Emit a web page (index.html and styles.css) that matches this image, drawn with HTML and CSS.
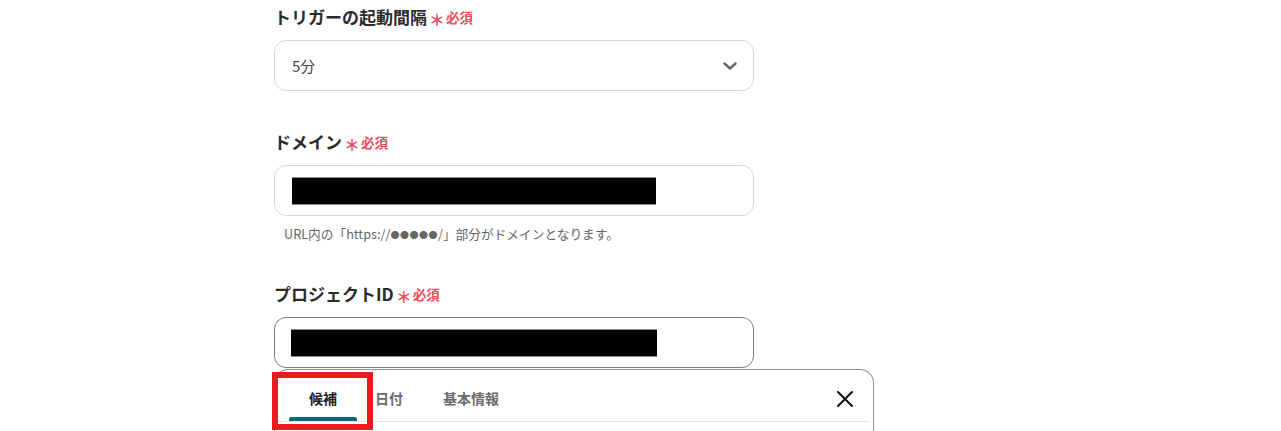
FILE: index.html
```html
<!DOCTYPE html>
<html lang="ja">
<head>
<meta charset="utf-8">
<title>Form</title>
<link rel="stylesheet" href="styles.css">
</head>
<body>
<div class="form">
  <div class="field first">
    <div class="label">トリガーの起動間隔<span class="req"><span class="ast">＊</span>必須</span></div>
    <div class="box select">
      <span class="value">5分</span>
      <svg class="chev" width="14" height="8" viewBox="0 0 14 8"><path d="M1.5 1.5 L7 6.5 L12.5 1.5" fill="none" stroke="#666" stroke-width="2.4" stroke-linecap="round" stroke-linejoin="round"/></svg>
    </div>
  </div>
  <div class="field second">
    <div class="label">ドメイン<span class="req"><span class="ast">＊</span>必須</span></div>
    <div class="box"><span class="mask mask-a"></span></div>
    <div class="help">URL内の「https://<span class="dots">●●●●●</span>/」部分がドメインとなります。</div>
  </div>
  <div class="field third">
    <div class="label">プロジェクトID<span class="req"><span class="ast">＊</span>必須</span></div>
    <div class="box focused"><span class="mask mask-b"></span></div>
  </div>
</div>
<div class="popup">
  <div class="tabs">
    <div class="tab active">候補</div>
    <div class="tab second-tab">日付</div>
    <div class="tab">基本情報</div>
    <svg class="close" width="18" height="18" viewBox="0 0 18 18"><path d="M2 2 L16 16 M16 2 L2 16" stroke="#111" stroke-width="2" stroke-linecap="round"/></svg>
  </div>
</div>
<div class="highlight"></div>
</body>
</html>
```
FILE: styles.css
```css
html, body {
  margin: 0;
  padding: 0;
  background: #fff;
  overflow: hidden;
}
body {
  width: 1281px;
  height: 431px;
  position: relative;
  font-family: "Noto Sans CJK JP", "Noto Sans", sans-serif;
  color: #333;
}
.form {
  padding-left: 274px;
  padding-top: 5px;
  width: 480px;
}
.field.second { margin-top: 39px; }
.field.third { margin-top: 38px; }
.label {
  font-size: 17px;
  font-weight: 700;
  line-height: 24px;
  height: 24px;
  color: #2b2b2b;
  margin-bottom: 11px;
  display: flex;
  align-items: center;
}
.req {
  color: #ea4c5d;
  font-size: 13.5px;
  font-weight: 700;
  margin-left: 2px;
  display: inline-flex;
  align-items: center;
}
.ast {
  font-size: 16px;
  font-weight: 700;
  margin-right: 1px;
  position: relative;
  top: 2px;
}
.box {
  box-sizing: border-box;
  height: 51px;
  width: 480px;
  border: 1px solid #d4d8de;
  border-radius: 12px;
  display: flex;
  align-items: center;
  padding-left: 17px;
  padding-right: 16px;
}
.box.focused {
  border-color: #7d7d7d;
}
.select {
  justify-content: space-between;
}
.value {
  font-size: 15px;
  color: #444;
}
.mask {
  display: block;
  height: 28px;
  box-sizing: border-box;
  background: #000;
  border-top: 1px solid #8a8a8a;
  border-bottom: 1px solid #8a8a8a;
}
.mask-a { width: 364px; }
.mask-b { width: 366px; margin-left: -1px; }
.help {
  margin-top: 9px;
  padding-left: 10px;
  font-size: 12.7px;
  line-height: 18px;
  color: #666;
}
.dots {
  font-size: 9px;
  letter-spacing: 0.5px;
  vertical-align: 1px;
}
.popup {
  position: absolute;
  left: 274px;
  top: 369px;
  width: 600px;
  height: 80px;
  box-sizing: border-box;
  background: #fff;
  border: 1px solid #8f8f8f;
  border-bottom: none;
  border-radius: 14px 14px 0 0;
}
.tabs {
  position: relative;
  display: flex;
  height: 51px;
  margin-right: 3px;
  padding-left: 14px;
  border-bottom: 1px solid #e4e4e4;
}
.tab {
  position: relative;
  padding: 0 20px;
  font-size: 14px;
  font-weight: 700;
  color: #6b6b6b;
  line-height: 56px;
}
.tab.second-tab {
  margin-left: -2px;
}
.tab.active {
  color: #222;
}
.tab.active::after {
  content: "";
  position: absolute;
  left: 0;
  right: 0;
  bottom: 0;
  height: 4px;
  background: #0d6780;
  border-radius: 2px 2px 0 0;
}
.close {
  position: absolute;
  right: 16px;
  top: 20px;
}
.highlight {
  position: absolute;
  left: 272px;
  top: 372px;
  width: 101px;
  height: 58px;
  box-sizing: border-box;
  border: 6px solid #e01f1f;
}
```
